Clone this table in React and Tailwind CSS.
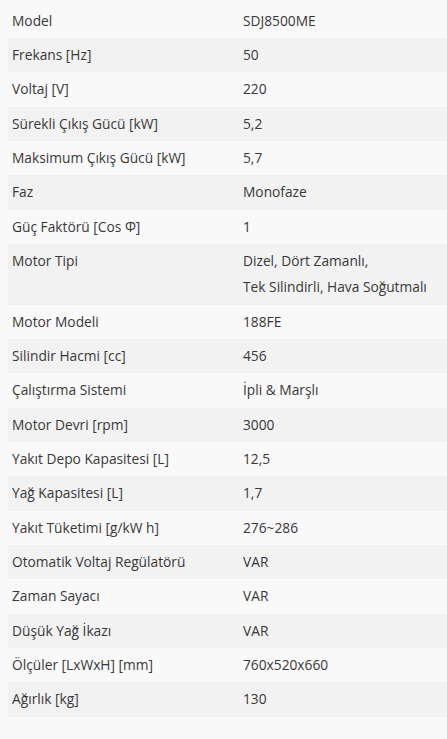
const rows = [
  ["Model", ["SDJ8500ME"]],
  ["Frekans [Hz]", ["50"]],
  ["Voltaj [V]", ["220"]],
  ["Sürekli Çıkış Gücü [kW]", ["5,2"]],
  ["Maksimum Çıkış Gücü [kW]", ["5,7"]],
  ["Faz", ["Monofaze"]],
  ["Güç Faktörü [Cos Φ]", ["1"]],
  ["Motor Tipi", ["Dizel, Dört Zamanlı,", "Tek Silindirli, Hava Soğutmalı"]],
  ["Motor Modeli", ["188FE"]],
  ["Silindir Hacmi [cc]", ["456"]],
  ["Çalıştırma Sistemi", ["İpli & Marşlı"]],
  ["Motor Devri [rpm]", ["3000"]],
  ["Yakıt Depo Kapasitesi [L]", ["12,5"]],
  ["Yağ Kapasitesi [L]", ["1,7"]],
  ["Yakıt Tüketimi [g/kW h]", ["276~286"]],
  ["Otomatik Voltaj Regülatörü", ["VAR"]],
  ["Zaman Sayacı", ["VAR"]],
  ["Düşük Yağ İkazı", ["VAR"]],
  ["Ölçüler [LxWxH] [mm]", ["760x520x660"]],
  ["Ağırlık [kg]", ["130"]],
];

export default function App() {
  return (
    <div className="min-h-[739px] w-[447px] bg-[#f9f9f9] pt-[3.67px] pl-[8px] text-[13.75px] text-[#383838]" style={{ fontFamily: '"Open Sans", sans-serif' }}>
      {rows.map(([k, v], i) => (
        <div key={k} className={`flex py-[4px] leading-[26.33px] ${i % 2 === 1 ? "bg-[#f2f2f2]" : ""}`}>
          <div className="w-[231px] pl-[4px] shrink-0 whitespace-nowrap">{k}</div>
          <div className="pl-[4px] whitespace-nowrap">
            {v.map((t) => (
              <div key={t}>{t}</div>
            ))}
          </div>
        </div>
      ))}
    </div>
  );
}
